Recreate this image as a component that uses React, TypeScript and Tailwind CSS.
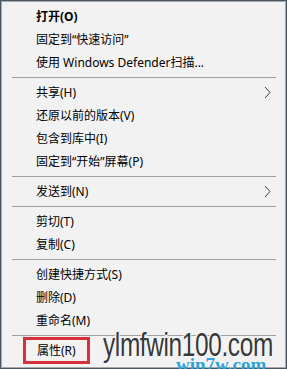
import React from "react";

type Entry = { label: string; bold?: boolean; arrow?: boolean; boxed?: boolean } | "sep";

const entries: Entry[] = [
  { label: "打开(O)", bold: true },
  { label: "固定到“快速访问”" },
  { label: "使用 Windows Defender扫描..." },
  "sep",
  { label: "共享(H)", arrow: true },
  { label: "还原以前的版本(V)" },
  { label: "包含到库中(I)" },
  { label: "固定到“开始”屏幕(P)" },
  "sep",
  { label: "发送到(N)", arrow: true },
  "sep",
  { label: "剪切(T)" },
  { label: "复制(C)" },
  "sep",
  { label: "创建快捷方式(S)" },
  { label: "删除(D)" },
  { label: "重命名(M)" },
  "sep",
  { label: "属性(R)", boxed: true },
];

const Chevron = () => (
  <svg width="7" height="13" viewBox="0 0 7 13" className="absolute right-[14px] top-[5px]">
    <path d="M1 1 L6 6.5 L1 12" fill="none" stroke="#3c3c3c" strokeWidth="1" />
  </svg>
);

export default function App() {
  return (
    <div className="relative w-[287px] h-[369px] overflow-hidden bg-[#4b5663] p-[1px]">
      <div
        className="relative h-full w-full bg-[#f2f2f2] border border-[#a8a8a8] pt-[3px] text-[12px] text-black"
        style={{ fontFamily: '"Noto Sans", "Noto Sans CJK SC", sans-serif' }}
      >
        {entries.map((e, i) =>
          e === "sep" ? (
            <div key={i} className="h-[7px] flex items-center pl-[10px] pr-[9px]">
              <div className="h-px w-full bg-[#a0a0a0]" />
            </div>
          ) : (
            <div key={i} className="relative h-[23px] flex items-center pl-[34px]">
              {e.boxed ? (
                <span className="ml-[-13px] h-[27px] px-[11px] flex items-center border-[3px] border-[#d7303b]">
                  {e.label}
                </span>
              ) : (
                <span className={e.bold ? "font-bold" : ""}>{e.label}</span>
              )}
              {e.arrow && <Chevron />}
            </div>
          )
        )}

        {/* watermark */}
        <div
          className="absolute left-[174px] bottom-[-7px] text-[19px] font-bold text-[#2aa3d9] leading-none whitespace-nowrap"
          style={{ fontFamily: '"Liberation Serif", serif' }}
        >
          win7w.com
        </div>
        <div
          className="absolute left-[101px] top-[326px] origin-left scale-x-[0.74] whitespace-nowrap leading-none text-[33px] tracking-[-0.5px] text-[#383838] [text-shadow:0_0_2px_#fff,0_0_2px_#fff,1px_1px_1px_#fff,-1px_-1px_1px_#fff,1px_-1px_1px_#ddd,-1px_1px_1px_#ddd]"
          style={{ fontFamily: '"Liberation Sans", sans-serif' }}
        >
          ylmfwin100.com
        </div>
      </div>
    </div>
  );
}
